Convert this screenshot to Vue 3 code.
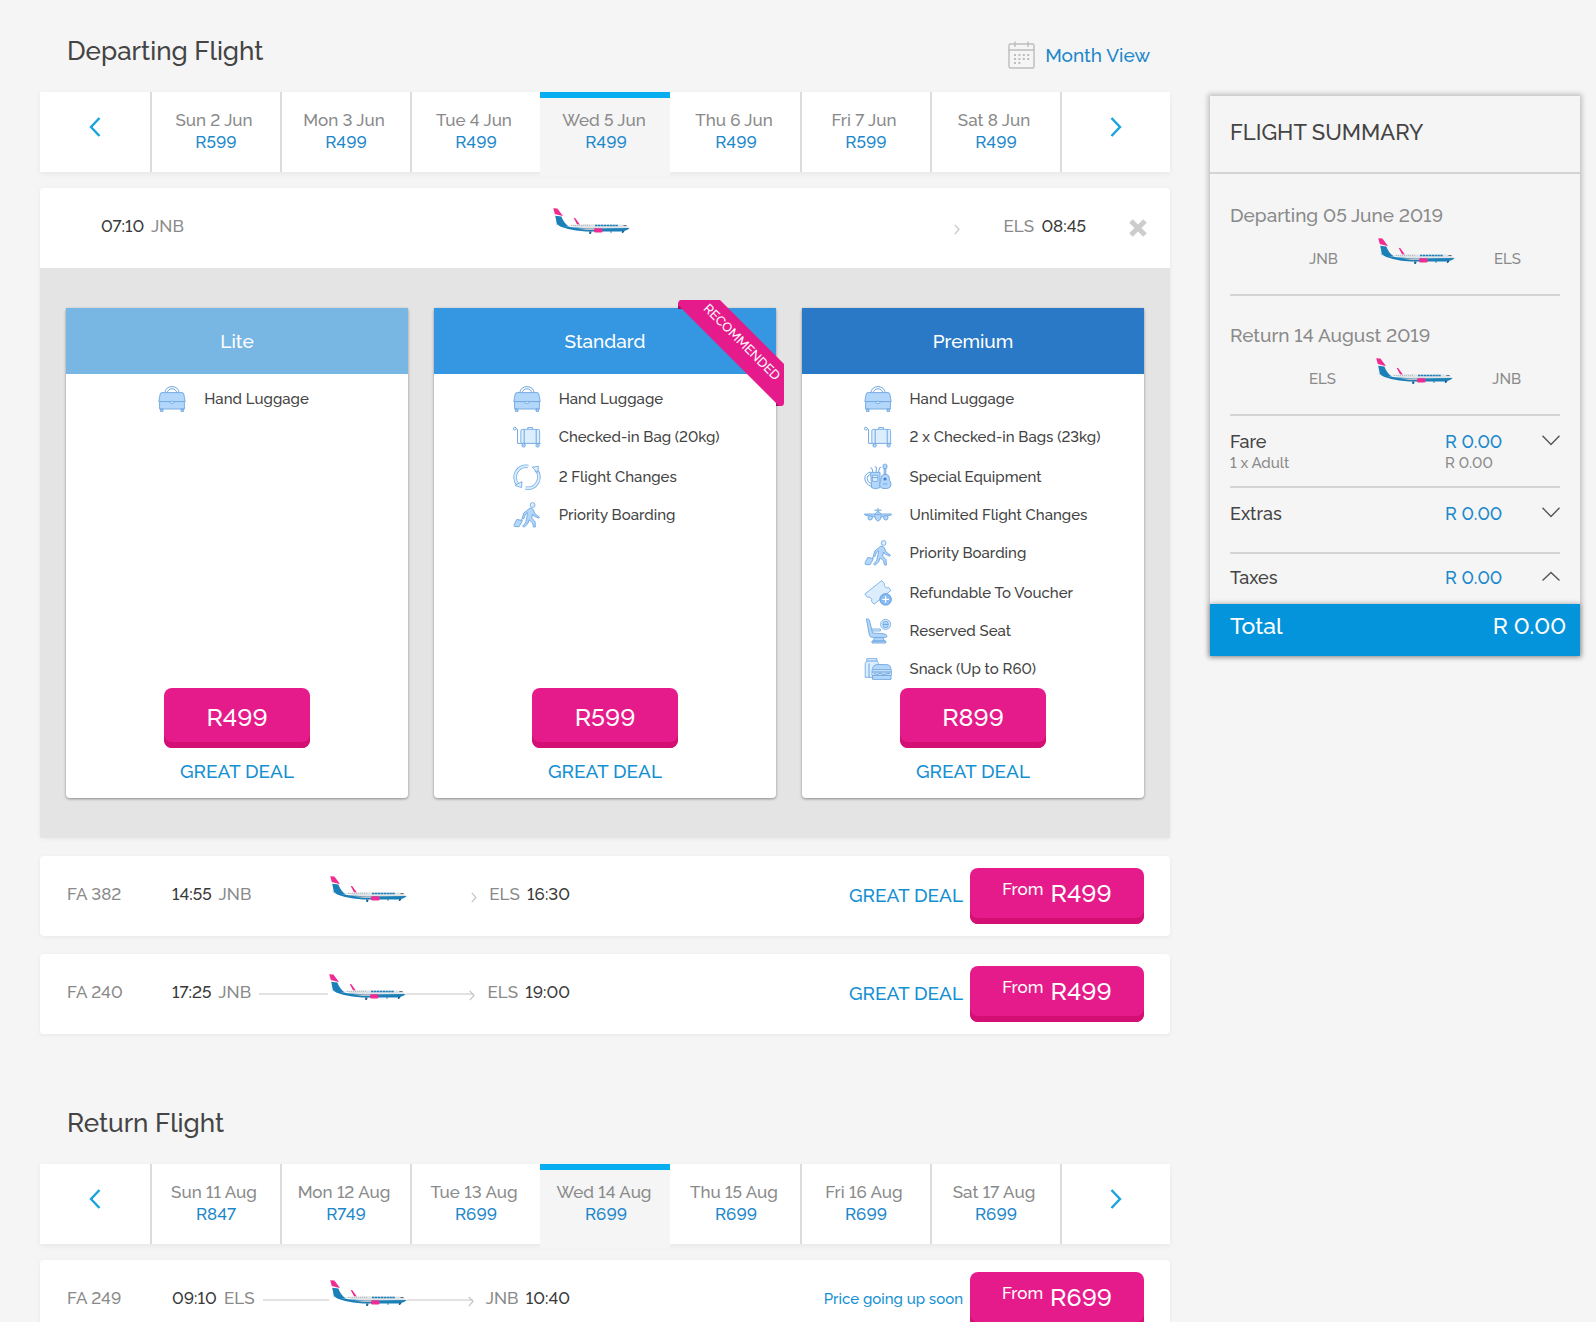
<template>
  <svg class="sprite" aria-hidden="true">
    <symbol id="plane" viewBox="0 0 78 28">
      <path fill="#e0e3e6" d="M0 13.6 L7 14.4 L16 17 L34 16.2 L70 16.4 Q75 17 77.5 20 L60 22.5 L36 22 Z" />
      <path fill="#1b7fb8" d="M3 15.6 Q10 18.4 20 19.2 L38 20.4 L77.6 20 Q75.5 22.8 69 23.4 L34 23.6 Q13 22.4 3 15.6 Z" />
      <path fill="#1b7fb8" d="M3.2 7.8 L9.4 8.4 Q11.4 14.6 17 18.6 L9 18.6 L4.8 15.8 Z" />
      <path fill="#ee2c91" d="M1.2 0.2 L5.4 0.6 L11 8 L7.5 7.2 L2.8 6 Z" />
      <path fill="#ee2c91" d="M21.6 9.8 L23.4 10.2 L27.8 16.4 L25 16.2 Z" />
      <path stroke="#8e9aa4" stroke-width="0.6" stroke-dasharray="1 1" d="M19 17.4 H38" />
      <path stroke="#1b7fb8" stroke-width="1.5" stroke-dasharray="2.4 0.5" d="M43 17.6 H66" />
      <path fill="#64727e" d="M71.4 17 h3.2 v1 h-3.2 Z" />
      <path fill="#b9bfc4" d="M25 20.6 L42 20.6 L43 22 L34 22 Z" />
      <rect x="42" y="20.2" width="8.6" height="4.4" rx="1.6" fill="#ee2c91" />
      <path fill="#1b6391" d="M37 23.5 h2.6 l-0.6 2.6 h-1.6 Z M58.5 23.2 h1 v1.6 h-1 Z M70 22.8 h2.8 l-1.8 2.2 h-1.2 Z" />
    </symbol>
    <symbol id="hand" viewBox="0 0 28 28">
      <path class="line" d="M6.6 8 Q8 1.6 14 1.6 Q20 1.6 21.4 8 M9 8 Q10.2 3.8 14 3.8 Q17.8 3.8 19 8" />
      <path class="mid" d="M4 7.6 H24 Q25.4 7.6 25.8 9 L27.2 16.6 H0.8 L2.2 9 Q2.6 7.6 4 7.6 Z" />
      <path class="mid" d="M1.6 16.6 H26.4 V24 H1.6 Z M2.4 24 H5 V26.4 H2.4 Z M23 24 H25.6 V26.4 H23 Z" />
      <path class="pale" d="M12 16.4 H16 V18 Q14 19.2 12 18 Z" />
    </symbol>
    <symbol id="bag" viewBox="0 0 28 28">
      <circle class="line" cx="1.8" cy="5.6" r="1.4" />
      <path class="line" d="M3.2 5.4 Q4.6 5.6 4.6 8 V20.4 H27.6" />
      <path class="line" d="M14.8 6.2 V4.6 H19.4 V6.2" />
      <rect class="pale" x="7.8" y="6.4" width="18.8" height="14" rx="1.4" />
      <path class="line" d="M11.2 6.4 V20.4 M23.2 6.4 V20.4" />
      <circle class="mid" cx="10.6" cy="22.4" r="1.7" />
      <circle class="mid" cx="24.6" cy="22.4" r="1.7" />
    </symbol>
    <symbol id="changes" viewBox="0 0 28 28">
      <path class="ring" d="M15.2 3.4 A11 11 0 0 0 5 21.6 M12.6 25 A11 11 0 0 0 22.8 6.6" />
      <path class="ring-in" d="M15.2 3.4 A11 11 0 0 0 5 21.6 M12.6 25 A11 11 0 0 0 22.8 6.6" />
      <path class="pale" d="M2 22.4 L8.6 24.6 L9 18.6 Z M19.2 4.2 L25.6 3.2 L24.6 9.6 Z" />
    </symbol>
    <symbol id="walk" viewBox="0 0 28 28">
      <circle class="pale" cx="19.6" cy="4" r="2.4" />
      <path class="mid" d="M16.8 7.2 Q19.4 6.6 20.4 9 L22 13 L26.4 16 L25.6 17.2 L20.6 14.8 L19.6 13 L18.6 17 L22 20.6 L22.4 26 H20.4 L19.6 21.8 L16 18.8 L14.6 23 L11 26.2 L9.6 25.2 L12.6 21.8 L14 15.6 L14.4 11.6 L12.6 13 L10.6 18 L9.2 17.4 L10.8 12 Z" />
      <path class="line" d="M9.6 17.8 L7.4 19.6" />
      <path class="mid" d="M3.8 18.4 L9.4 19.6 L6 25.8 L1.4 25.4 Q0.8 24.6 1.2 23.6 Z" />
    </symbol>
    <symbol id="equipment" viewBox="0 0 28 28">
      <path class="line" d="M6.4 9 Q0.6 11 0.8 15.4 Q1.2 21 7.6 23.6 M7 11 Q3 12.4 3 15.4 Q3.2 19 7.4 21" />
      <path class="line" d="M9 9.6 L8 5.6 L6.4 4.6 M12 9.6 L12.6 4.4 L10.6 3.6 M14.4 9.6 L15.6 4.8 L17 4.2" />
      <path class="mid" d="M6.6 9.4 H16 V24.6 Q11 27 7.6 24.6 Z" />
      <path class="pale" d="M8.4 12.4 H13.8 V18.4 H8.4 Z" />
      <path class="line" d="M8.4 14.6 H13.8" />
      <rect class="mid" x="19" y="1.2" width="4" height="4.6" rx="1.6" />
      <path class="mid" d="M20.2 5.8 H21.8 V12 H20.2 Z" />
      <path class="mid" d="M21 11.4 Q25.4 11.4 25.2 15 Q25 17 26.4 18.8 Q29 25.6 21 25.6 Q14 25.6 16.2 18.8 Q17.2 17 17 15 Q17 11.4 21 11.4 Z" />
      <circle cx="21" cy="16" r="1.5" fill="#3c7fc9" />
      <path class="line" d="M18.8 21 H23.4" />
    </symbol>
    <symbol id="unlimited" viewBox="0 0 28 28">
      <path class="line" d="M14 7 V11 M10.4 9.2 H17.6" />
      <path class="mid" d="M0.4 13 H27.6 L26.6 14.4 L17 16 H11 L1.4 14.4 Z" />
      <circle class="mid" cx="6.2" cy="16.8" r="2.2" />
      <circle class="mid" cx="21.8" cy="16.8" r="2.2" />
      <path class="mid" d="M14 10.8 Q17.2 11 17.2 15.4 Q17 18.8 14 20.2 Q11 18.8 10.8 15.4 Q10.8 11 14 10.8 Z" />
      <path class="line" d="M12.2 13.6 H15.8" />
    </symbol>
    <symbol id="voucher" viewBox="0 0 28 28">
      <path class="pale" d="M0.8 15 L17.8 1.6 L20.4 4.6 Q19.6 6.8 21.4 8.2 Q23 9.4 24.6 8.6 L27 11.4 L10 25.2 L7.6 22.4 Q8.4 20.4 6.6 18.8 Q5 17.6 3.4 18.2 Z" />
      <circle class="deep" cx="21.6" cy="20.4" r="5.8" />
      <path d="M21.6 17 V23.8 M18.2 20.4 H25" stroke="#fff" stroke-width="1.3" />
    </symbol>
    <symbol id="seat" viewBox="0 0 28 28">
      <path class="mid" d="M2.4 2 Q4.4 1.2 5.4 3 L8.6 16 L18 16.6 Q23.4 17 23 19.4 Q22.6 20.4 21 20.4 H8 Q6 20.2 5.4 18 Z" />
      <path class="pale" d="M7.8 12 H16.4 V14 H8.4 Z" />
      <path class="mid" d="M10.6 20.6 L9.2 24 H20.4 L19 20.6 Z M8 24 H21.8 V26 H8 Z" />
      <circle class="pale" cx="21.6" cy="7.4" r="5" />
      <rect class="mid" x="19" y="4.4" width="5.2" height="6.2" rx="2.2" />
      <path class="line" d="M19 7.4 H24.2" />
    </symbol>
    <symbol id="snack" viewBox="0 0 28 28">
      <path class="pale" d="M2.8 3.6 H13 V6 L14.4 8.4 V22.4 H1.2 V8.4 L2.8 6 Z" />
      <path class="line" d="M2.8 6 H13 M5 8.4 V22" />
      <path class="mid" d="M8.6 14.6 Q8.6 9.6 14 9.6 H22 Q27 9.6 27 14.6 Z" />
      <path class="pale" d="M8 14.8 H27.4 V17 H8 Z M8 17 H27.4 V20.4 H8 Z" />
      <path class="mid" d="M8.6 20.4 H27 V24.4 H8.6 Z" />
      <path class="line" d="M10 18.4 L13 19.4 L16 18.2 L19 19.4 L26 18.4" />
    </symbol>
  </svg>

  <div class="page">
    <main class="results">
      <section v-for="trip in trips" :key="trip.title" class="trip">
        <header class="trip-header">
          <h2>{{ trip.title }}</h2>
          <a v-if="trip.monthView" href="#" class="month-view" @click.prevent>
            <svg width="28" height="28" viewBox="0 0 28 28" fill="none" stroke="#bdbdbd">
              <rect x="1" y="3" width="25" height="24" rx="1.5" stroke-width="1.4" />
              <path d="M1 9 H26 M7 0.5 V6 M20 0.5 V6" stroke-width="1.4" />
              <path d="M6 14 H22 M6 18 H22 M6 22 H14" stroke-width="2" stroke-dasharray="2 2.4" />
            </svg>
            Month View
          </a>
        </header>

        <nav class="days">
          <button class="nav-button" aria-label="Earlier dates">
            <svg width="12" height="20" viewBox="0 0 12 20"><path d="M10.5 1 L2 10 L10.5 19" /></svg>
          </button>
          <button
            v-for="(day, i) in trip.days"
            :key="day.date"
            class="day"
            :class="{ active: trip.selected === i }"
            @click="trip.selected = i"
          >
            <span class="day-date">{{ day.date }}</span>
            <span class="day-price">{{ day.price }}</span>
          </button>
          <button class="nav-button next" aria-label="Later dates">
            <svg width="12" height="20" viewBox="0 0 12 20"><path d="M1.5 1 L10 10 L1.5 19" /></svg>
          </button>
        </nav>

        <article v-for="flight in trip.flights" :key="flight.depart" class="flight">
          <div class="flight-row" :class="{ open: flight.open }">
            <span v-if="!flight.open" class="flight-no">{{ flight.number }}</span>
            <div class="route">
              <span class="place"><b>{{ flight.depart }}</b> {{ flight.from }}</span>
              <span class="track" :class="{ plain: !flight.line }">
                <i></i>
                <svg class="plane"><use href="#plane" /></svg>
                <i></i>
                <svg class="tip" width="6" height="11" viewBox="0 0 6 11"><path d="M0.8 0.8 L5 5.5 L0.8 10.2" /></svg>
              </span>
              <span class="place">{{ flight.to }} <b>{{ flight.arrive }}</b></span>
            </div>
            <button v-if="flight.open" class="close" aria-label="Close">
              <svg width="20" height="20" viewBox="0 0 20 20"><path d="M3 3 L17 17 M17 3 L3 17" /></svg>
            </button>
            <template v-else>
              <span class="note" :class="{ small: flight.soon }">{{ flight.note }}</span>
              <button class="price-button from-button">
                <span class="from">From</span>{{ flight.price }}
              </button>
            </template>
          </div>

          <div v-if="flight.open" class="fares">
            <div v-for="fare in fares" :key="fare.name" class="fare" :class="fare.tier">
              <h3>{{ fare.name }}</h3>
              <svg v-if="fare.recommended" class="ribbon" width="106" height="106" viewBox="0 0 106 106">
                <path fill="#9c0f5e" d="M0 3 V9 H8 Z M98 98 V106 H104 Z" />
                <path fill="#e61b8b" d="M3 0 H42 L106 64 V103 Q106 106 103 106 H101 L0 5 Q0 0 3 0 Z" />
                <text transform="translate(64 42) rotate(45)" text-anchor="middle" dominant-baseline="central">RECOMMENDED</text>
              </svg>
              <ul>
                <li v-for="feature in fare.features" :key="feature.text">
                  <svg width="28" height="28"><use :href="'#' + feature.icon" /></svg>
                  {{ feature.text }}
                </li>
              </ul>
              <button class="price-button">{{ fare.price }}</button>
              <p class="deal">GREAT DEAL</p>
            </div>
          </div>
        </article>
      </section>
    </main>

    <aside class="summary">
      <h2>FLIGHT SUMMARY</h2>
      <div class="summary-body">
        <div v-for="leg in legs" :key="leg.label" class="leg">
          <p>{{ leg.label }}</p>
          <div class="leg-route">
            <span>{{ leg.from }}</span>
            <svg class="plane"><use href="#plane" /></svg>
            <span>{{ leg.to }}</span>
          </div>
        </div>
        <div v-for="cost in costs" :key="cost.name" class="cost" :class="{ detailed: cost.detail }">
          <div>{{ cost.name }}<small v-if="cost.detail">{{ cost.detail }}</small></div>
          <div class="amount">R 0.00<small v-if="cost.detail">R 0.00</small></div>
          <button :aria-label="cost.name" @click="cost.up = !cost.up">
            <svg width="18" height="11" viewBox="0 0 18 11">
              <path :d="cost.up ? 'M0.5 9.5 L9 1.5 L17.5 9.5' : 'M0.5 0.8 L9 9.6 L17.5 0.8'" />
            </svg>
          </button>
        </div>
      </div>
      <div class="total">
        <span>Total</span>
        <span>R 0.00</span>
      </div>
    </aside>
  </div>
</template>

<script setup>
import { reactive } from 'vue'

const hand = { icon: 'hand', text: 'Hand Luggage' }
const boarding = { icon: 'walk', text: 'Priority Boarding' }

const fares = [
  { name: 'Lite', tier: 'lite', price: 'R499', features: [hand] },
  {
    name: 'Standard',
    tier: 'standard',
    price: 'R599',
    recommended: true,
    features: [
      hand,
      { icon: 'bag', text: 'Checked-in Bag (20kg)' },
      { icon: 'changes', text: '2 Flight Changes' },
      boarding
    ]
  },
  {
    name: 'Premium',
    tier: 'premium',
    price: 'R899',
    features: [
      hand,
      { icon: 'bag', text: '2 x Checked-in Bags (23kg)' },
      { icon: 'equipment', text: 'Special Equipment' },
      { icon: 'unlimited', text: 'Unlimited Flight Changes' },
      boarding,
      { icon: 'voucher', text: 'Refundable To Voucher' },
      { icon: 'seat', text: 'Reserved Seat' },
      { icon: 'snack', text: 'Snack (Up to R60)' }
    ]
  }
]

const trips = reactive([
  {
    title: 'Departing Flight',
    monthView: true,
    selected: 3,
    days: [
      { date: 'Sun 2 Jun', price: 'R599' },
      { date: 'Mon 3 Jun', price: 'R499' },
      { date: 'Tue 4 Jun', price: 'R499' },
      { date: 'Wed 5 Jun', price: 'R499' },
      { date: 'Thu 6 Jun', price: 'R499' },
      { date: 'Fri 7 Jun', price: 'R599' },
      { date: 'Sat 8 Jun', price: 'R499' }
    ],
    flights: [
      { depart: '07:10', from: 'JNB', to: 'ELS', arrive: '08:45', open: true },
      { number: 'FA 382', depart: '14:55', from: 'JNB', to: 'ELS', arrive: '16:30', note: 'GREAT DEAL', price: 'R499' },
      { number: 'FA 240', depart: '17:25', from: 'JNB', to: 'ELS', arrive: '19:00', note: 'GREAT DEAL', price: 'R499', line: true }
    ]
  },
  {
    title: 'Return Flight',
    selected: 3,
    days: [
      { date: 'Sun 11 Aug', price: 'R847' },
      { date: 'Mon 12 Aug', price: 'R749' },
      { date: 'Tue 13 Aug', price: 'R699' },
      { date: 'Wed 14 Aug', price: 'R699' },
      { date: 'Thu 15 Aug', price: 'R699' },
      { date: 'Fri 16 Aug', price: 'R699' },
      { date: 'Sat 17 Aug', price: 'R699' }
    ],
    flights: [
      { number: 'FA 249', depart: '09:10', from: 'ELS', to: 'JNB', arrive: '10:40', note: 'Price going up soon', soon: true, price: 'R699', line: true }
    ]
  }
])

const legs = [
  { label: 'Departing 05 June 2019', from: 'JNB', to: 'ELS' },
  { label: 'Return 14 August 2019', from: 'ELS', to: 'JNB' }
]

const costs = reactive([
  { name: 'Fare', detail: '1 x Adult', up: false },
  { name: 'Extras', up: false },
  { name: 'Taxes', up: true }
])
</script>

<style>
body {
  margin: 0;
  background: #f5f5f5;
}
</style>

<style scoped>
.sprite {
  position: absolute;
  width: 0;
  height: 0;
}

.line { fill: none; stroke: #6fa6e0; stroke-width: 1; }
.pale { fill: #dceefe; stroke: #78ade4; stroke-width: 0.9; }
.mid { fill: #b3d7fb; stroke: #6fa6e0; stroke-width: 0.9; }
.deep { fill: #86bbf3; stroke: #5b97d8; stroke-width: 0.8; }
.ring { fill: none; stroke: #78ade4; stroke-width: 3.6; }
.ring-in { fill: none; stroke: #dceefe; stroke-width: 2; }

.page {
  display: grid;
  grid-template-columns: minmax(0, 1fr) 370px;
  column-gap: 40px;
  align-items: start;
  padding: 0 16px 40px 40px;
  font-family: Raleway, Lato, sans-serif;
  font-variant-numeric: lining-nums;
  font-weight: 500;
  font-size: 17px;
  line-height: 22px;
  color: #444;
}

h2, h3, p, ul {
  margin: 0;
  padding: 0;
  font-weight: 500;
}

button {
  border: 0;
  padding: 0;
  background: none;
  font: inherit;
  font-variant-numeric: lining-nums;
  color: inherit;
  cursor: pointer;
}

.trip {
  margin-bottom: 38px;
}

.trip-header {
  display: flex;
  justify-content: space-between;
  padding: 35px 20px 25px 27px;
}

.trip-header h2 {
  font-size: 26px;
  line-height: 32px;
}

.month-view {
  display: flex;
  align-items: center;
  gap: 9px;
  height: 40px;
  margin-bottom: -8px;
  font-size: 19px;
  color: #1c88cb;
  text-decoration: none;
}

.days {
  display: grid;
  grid-template-columns: 11fr repeat(7, 13fr) 11fr;
  height: 80px;
  margin-bottom: 16px;
  background: #fff;
  box-shadow: 0 2px 5px rgba(0, 0, 0, 0.06);
}

.nav-button {
  display: flex;
  justify-content: center;
  padding-top: 25px;
}

.nav-button.next {
  border-left: 2px solid #dcdcdc;
}

.nav-button path {
  fill: none;
  stroke: #17a2e0;
  stroke-width: 2.4;
}

.day {
  display: flex;
  flex-direction: column;
  align-items: center;
  padding-top: 17px;
  border-left: 2px solid #dcdcdc;
}

.day.active {
  margin-bottom: -4px;
  padding-left: 2px;
  border-left: 0;
  background: #f5f5f5;
  box-shadow: inset 0 6px #07aeef;
}

.day.active + .day {
  border-color: transparent;
}

.day-date {
  padding-right: 4px;
  color: #8a8a8a;
}

.day-price {
  color: #1c88cb;
}

.flight {
  margin-bottom: 18px;
  border-radius: 4px;
  background: #fff;
  box-shadow: 0 1px 4px rgba(0, 0, 0, 0.06);
}

.flight-row {
  display: flex;
  align-items: center;
  box-sizing: border-box;
  height: 80px;
  padding: 0 26px 4px 27px;
}

.flight-row.open {
  padding: 0 20px 4px 61px;
}

.flight-no {
  width: 105px;
  color: #8a8a8a;
}

.route {
  display: flex;
  align-items: center;
  width: 398px;
  color: #8a8a8a;
}

.open .route {
  flex: 1;
  width: auto;
}

.place {
  white-space: pre;
}

.place b {
  margin-right: 3px;
  font-weight: 500;
  color: #3a3a3a;
}

.place:last-child b {
  margin: 0 0 0 3px;
}

.track {
  display: flex;
  flex: 1;
  align-items: center;
  margin: 0 12px 0 8px;
}

.track i {
  flex: 1;
  height: 2px;
  margin-top: 4px;
  background: #e2e2e2;
}

.track.plain i {
  background: none;
}

.open .track {
  margin: 0 44px 0 40px;
}

.plane {
  width: 78px;
  height: 28px;
  margin-bottom: 8px;
}

.tip {
  margin: 6px 0 0 -5px;
}

.tip path {
  fill: none;
  stroke: #c4c4c4;
  stroke-width: 1.2;
}

.close {
  display: flex;
  margin: 4px 2px 0 42px;
}

.close path {
  stroke: #ccc;
  stroke-width: 5;
}

.note {
  margin-left: auto;
  padding: 2px 7px 0 0;
  font-size: 19px;
  color: #1590d2;
}

.note.small {
  font-size: 15px;
}

.price-button {
  display: block;
  width: 146px;
  height: 60px;
  padding-bottom: 2px;
  border-radius: 8px;
  background: #e61b8b;
  box-shadow: inset 0 -6px #d30f74;
  font-size: 25px;
  color: #fff;
}

.from-button {
  width: 174px;
  height: 56px;
  margin-top: 4px;
  padding-bottom: 10px;
}

.from {
  margin-right: 7px;
  font-size: 17px;
  vertical-align: 7px;
}

.fares {
  display: grid;
  grid-template-columns: repeat(3, 1fr);
  gap: 26px;
  padding: 40px 26px;
  background: #e4e4e4;
}

.fare {
  position: relative;
  display: flex;
  flex-direction: column;
  align-items: center;
  border-radius: 2px 2px 4px 4px;
  background: #fff;
  box-shadow: 0 1px 3px rgba(0, 0, 0, 0.4);
}

.fare h3 {
  align-self: stretch;
  font-size: 19px;
  line-height: 66px;
  text-align: center;
  color: #fff;
}

.lite h3 { background: #78b6e4; }
.standard h3 { background: #3596e1; }
.premium h3 { background: #2979c7; }

.fare ul {
  flex: 1;
  align-self: stretch;
  padding-top: 6px;
  list-style: none;
}

.lite ul { padding-left: 27%; }
.standard ul { padding-left: 23%; }
.premium ul { padding-left: 18%; }

.fare li {
  display: flex;
  align-items: center;
  gap: 18px;
  height: 38px;
  font-size: 15px;
}

.fare li:nth-child(3n) {
  margin-top: 2px;
}

.ribbon {
  position: absolute;
  top: -8px;
  right: -8px;
  overflow: visible;
}

.ribbon text {
  font-size: 13px;
  fill: #fff;
}

.deal {
  padding: 12px 0 16px;
  font-size: 19px;
  color: #1590d2;
}

.summary {
  margin-top: 96px;
  box-shadow: 0 0 5px 2px rgba(0, 0, 0, 0.22);
}

.summary h2 {
  padding: 0 20px 4px;
  border-bottom: 2px solid #d4d4d4;
  font-size: 22px;
  line-height: 72px;
}

.summary-body {
  padding: 0 20px;
}

.leg {
  height: 118px;
  border-bottom: 2px solid #d4d4d4;
  font-size: 19px;
  color: #8a8a8a;
}

.leg:first-child {
  height: 120px;
}

.leg p {
  padding-top: 28px;
}

.leg:first-child p {
  padding-top: 30px;
}

.leg-route {
  display: flex;
  align-items: center;
  justify-content: space-between;
  padding: 12px 39px 0 79px;
  font-size: 15px;
}

.leg-route .plane {
  margin-bottom: 14px;
}

.cost {
  display: grid;
  grid-template-columns: 1fr 97px 18px;
  align-items: start;
  height: 49px;
  padding-top: 15px;
  border-bottom: 2px solid #d4d4d4;
  font-size: 18px;
}

.cost.detailed {
  height: 55px;
}

.cost:last-child {
  height: 37px;
  padding-top: 13px;
  border-bottom: 0;
}

.cost small {
  display: block;
  font-size: 15px;
  line-height: 20px;
  color: #8a8a8a;
}

.amount {
  color: #1c88cb;
}

.cost button {
  line-height: 18px;
}

.cost path {
  fill: none;
  stroke: #555;
  stroke-width: 1.4;
}

.total {
  display: flex;
  justify-content: space-between;
  height: 44px;
  padding: 8px 14px 0 20px;
  background: #0494dc;
  box-shadow: 0 0 5px rgba(0, 0, 0, 0.35);
  font-size: 23px;
  line-height: 28px;
  color: #fff;
}
</style>
